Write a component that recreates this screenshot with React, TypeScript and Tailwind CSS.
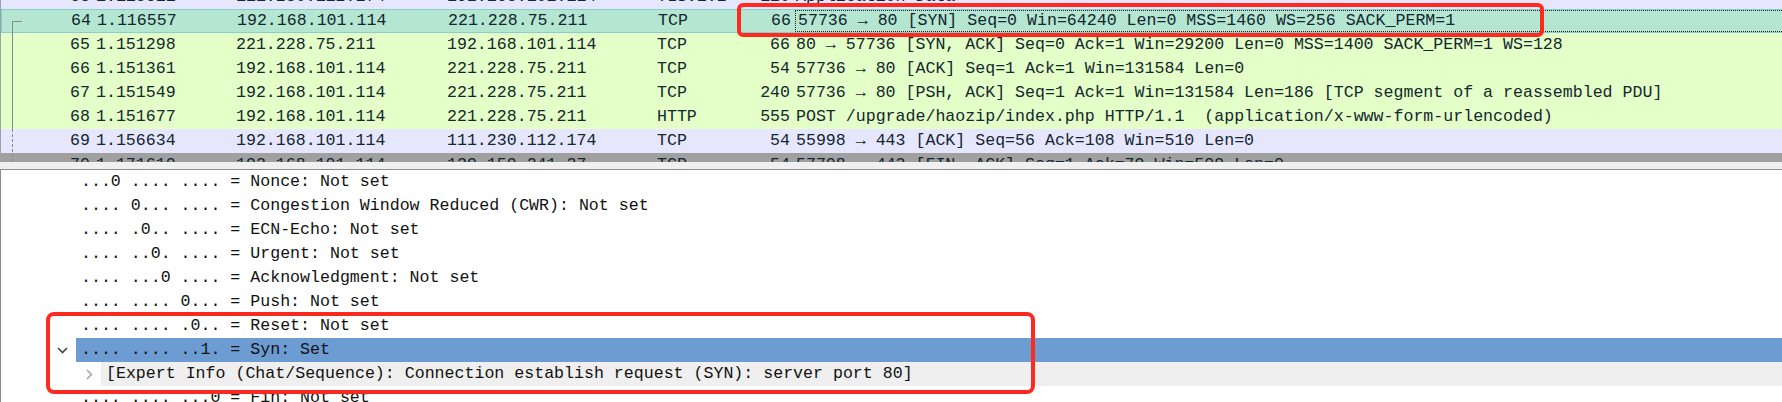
type Packet = {
  no: number;
  time: string;
  src: string;
  dst: string;
  proto: string;
  len: string;
  info: string;
  bg: string;
  selected?: boolean;
};

const packets: Packet[] = [
  { no: 63, time: "1.115811", src: "111.230.112.174", dst: "192.168.101.114", proto: "TLSv1.2", len: "120", info: "Application Data", bg: "bg-[#e7e6ff]" },
  { no: 64, time: "1.116557", src: "192.168.101.114", dst: "221.228.75.211", proto: "TCP", len: "66", info: "57736 → 80 [SYN] Seq=0 Win=64240 Len=0 MSS=1460 WS=256 SACK_PERM=1", bg: "bg-[#b4e6d2]", selected: true },
  { no: 65, time: "1.151298", src: "221.228.75.211", dst: "192.168.101.114", proto: "TCP", len: "66", info: "80 → 57736 [SYN, ACK] Seq=0 Ack=1 Win=29200 Len=0 MSS=1400 SACK_PERM=1 WS=128", bg: "bg-[#e4ffc7]" },
  { no: 66, time: "1.151361", src: "192.168.101.114", dst: "221.228.75.211", proto: "TCP", len: "54", info: "57736 → 80 [ACK] Seq=1 Ack=1 Win=131584 Len=0", bg: "bg-[#e4ffc7]" },
  { no: 67, time: "1.151549", src: "192.168.101.114", dst: "221.228.75.211", proto: "TCP", len: "240", info: "57736 → 80 [PSH, ACK] Seq=1 Ack=1 Win=131584 Len=186 [TCP segment of a reassembled PDU]", bg: "bg-[#e4ffc7]" },
  { no: 68, time: "1.151677", src: "192.168.101.114", dst: "221.228.75.211", proto: "HTTP", len: "555", info: "POST /upgrade/haozip/index.php HTTP/1.1  (application/x-www-form-urlencoded)", bg: "bg-[#e4ffc7]" },
  { no: 69, time: "1.156634", src: "192.168.101.114", dst: "111.230.112.174", proto: "TCP", len: "54", info: "55998 → 443 [ACK] Seq=56 Ack=108 Win=510 Len=0", bg: "bg-[#e7e6ff]" },
  { no: 70, time: "1.171610", src: "192.168.101.114", dst: "139.159.241.37", proto: "TCP", len: "54", info: "57708 → 443 [FIN, ACK] Seq=1 Ack=79 Win=509 Len=0", bg: "bg-[#a0a0a0]" },
];

const flags = [
  "...0 .... .... = Nonce: Not set",
  ".... 0... .... = Congestion Window Reduced (CWR): Not set",
  ".... .0.. .... = ECN-Echo: Not set",
  ".... ..0. .... = Urgent: Not set",
  ".... ...0 .... = Acknowledgment: Not set",
  ".... .... 0... = Push: Not set",
  ".... .... .0.. = Reset: Not set",
];

const PacketRow = ({ p }: { p: Packet }) => {
  return (
    <div
      className={`flex h-6 items-center whitespace-pre ${p.bg} ${
        p.selected ? "border-y border-l border-[#86cfd0]" : ""
      }`}
    >
      <span className="w-[89px] shrink-0 text-right">{p.no}</span>
      <span className="w-[146px] shrink-0 pl-[6px]">{p.time}</span>
      <span className="w-[211px] shrink-0">{p.src}</span>
      <span className="w-[210px] shrink-0">{p.dst}</span>
      <span className="w-[80px] shrink-0">{p.proto}</span>
      <span className="w-[53px] shrink-0 text-right">{p.len}</span>
      {p.selected ? (
        <span className="ml-[4px] flex flex-1 items-center self-stretch border border-r-0 border-dotted border-[#222] pl-[2px]">
          {p.info}
        </span>
      ) : (
        <span className="flex-1 pl-[6px]">{p.info}</span>
      )}
    </div>
  );
};

export default function App() {
  return (
    <div className="relative h-[402px] w-[1782px] overflow-hidden bg-white font-['Liberation_Mono','DejaVu_Sans_Mono',monospace] text-[16.6px] leading-none">
      {/* packet list */}
      <div className="relative h-[162px] overflow-hidden border-l border-[#a0a0a0] text-[#12272e]">
        <div className="-mt-[15px]">
          {packets.map((p) => (
            <PacketRow key={p.no} p={p} />
          ))}
        </div>
        <svg className="absolute left-0 top-0" width="30" height="162">
          <line x1="11.5" y1="21.5" x2="21" y2="21.5" stroke="#8a8a8a" strokeWidth="1" />
          <line x1="11.5" y1="21" x2="11.5" y2="129" stroke="#8a8a8a" strokeWidth="1" />
          <line x1="11.5" y1="129" x2="11.5" y2="162" stroke="#8a8a8a" strokeWidth="1" strokeDasharray="3 2" />
        </svg>
      </div>

      {/* splitter */}
      <div className="h-[7px] bg-[#f0f0f0]" />

      {/* packet details */}
      <div className="h-[233px] border-l border-t border-[#8c8c8c] text-[#111]">
        {flags.map((f) => (
          <div key={f} className="flex h-6 items-center whitespace-pre pl-[80px]">
            {f}
          </div>
        ))}
        <div className="flex h-6 whitespace-pre">
          <div className="flex w-[75px] shrink-0 items-center pl-[56px]">
            <svg width="11" height="7" viewBox="0 0 11 7">
              <path d="M1 1 L5.5 5.5 L10 1" fill="none" stroke="#444" strokeWidth="1.6" />
            </svg>
          </div>
          <div className="flex flex-1 items-center bg-[#6c9cd2] pl-[5px]">.... .... ..1. = Syn: Set</div>
        </div>
        <div className="flex h-6 whitespace-pre">
          <div className="flex w-[100px] shrink-0 items-center pl-[85px]">
            <svg width="7" height="11" viewBox="0 0 7 11">
              <path d="M1 1 L5.5 5.5 L1 10" fill="none" stroke="#a8a8a8" strokeWidth="1.6" />
            </svg>
          </div>
          <div className="flex flex-1 items-center bg-[#efefef] pl-[5px]">
            [Expert Info (Chat/Sequence): Connection establish request (SYN): server port 80]
          </div>
        </div>
        <div className="flex h-6 items-center whitespace-pre pl-[80px]">.... .... ...0 = Fin: Not set</div>
      </div>

      {/* annotations */}
      <div className="absolute left-[737px] top-[3px] h-[34px] w-[807px] rounded-[6px] border-4 border-[#ff2a1f]" />
      <div className="absolute left-[46px] top-[312px] h-[82px] w-[989px] rounded-[8px] border-4 border-[#ff2a1f]" />
    </div>
  );
}
